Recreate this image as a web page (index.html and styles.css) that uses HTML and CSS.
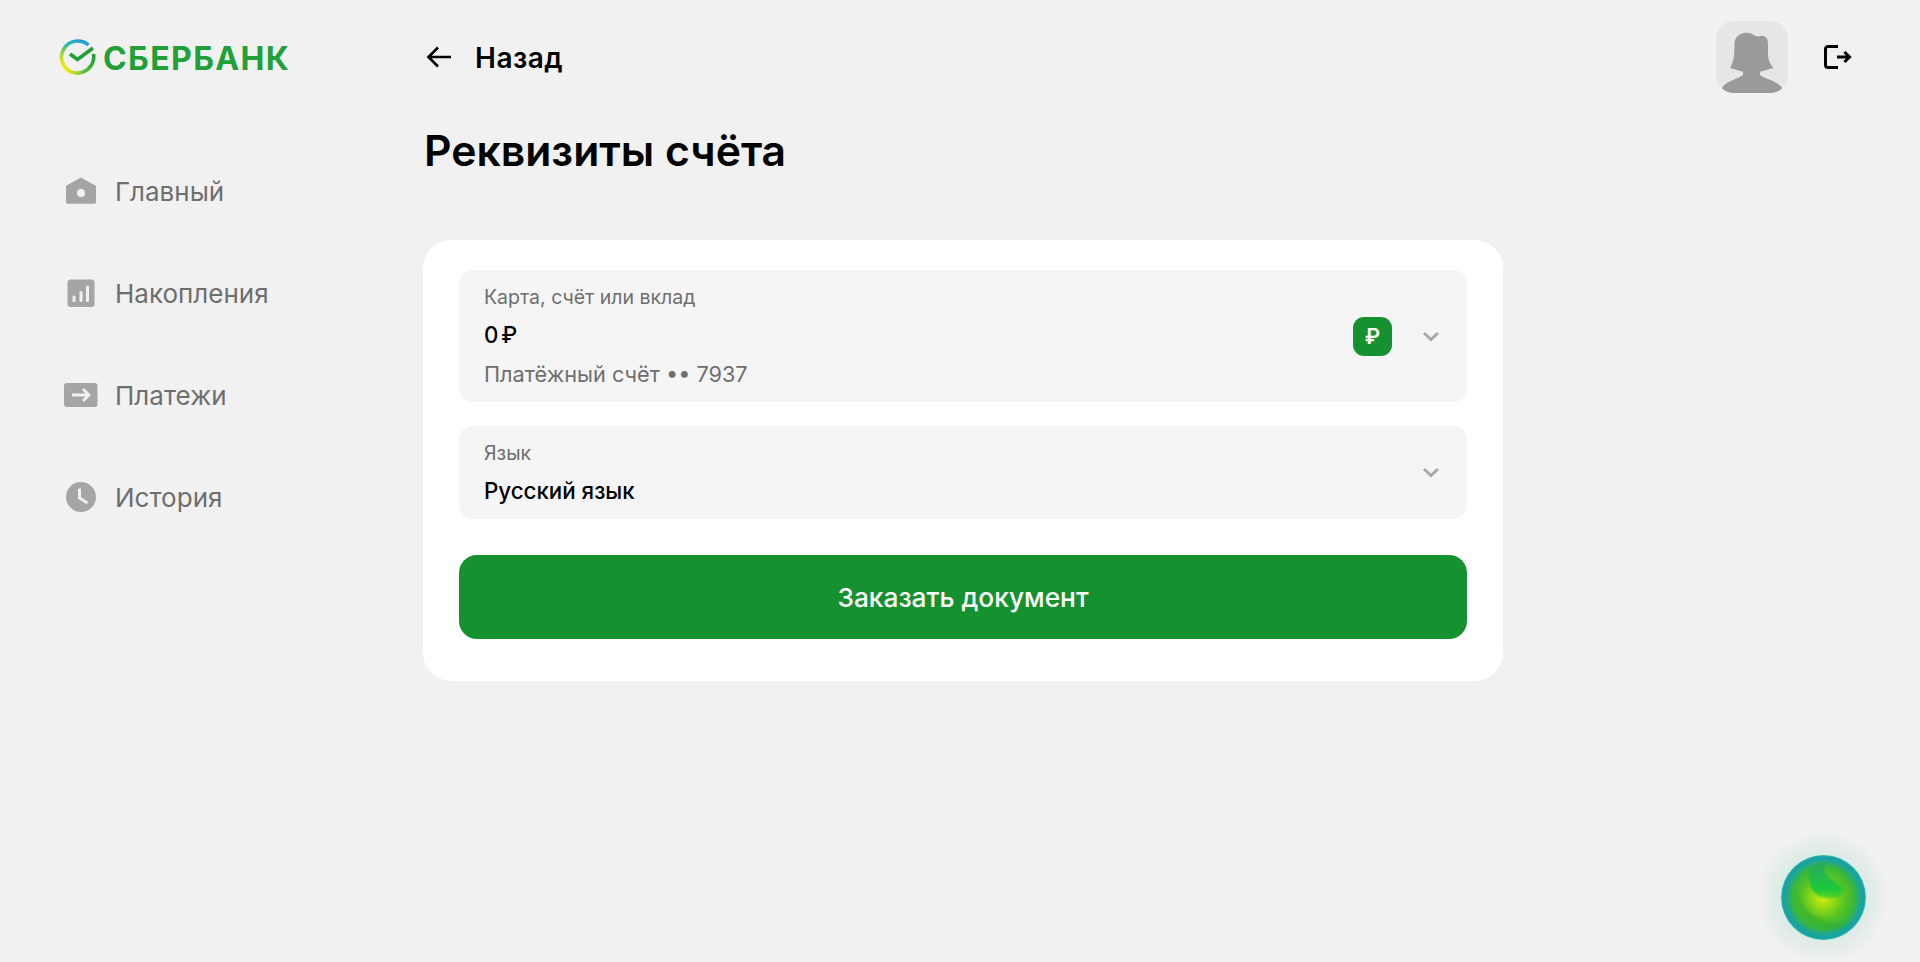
FILE: index.html
```html
<!DOCTYPE html>
<html lang="ru">
<head>
    <meta charset="UTF-8">
    <meta name="viewport" content="width=device-width, initial-scale=1.0">
    <title>Реквизиты счёта</title>

    <link rel="stylesheet" href="styles.css">
</head>

<body>
  <div class="layout">
    <aside class="sidebar">
      <div class="logo">
        <svg class="logo-mark" width="37" height="37" viewBox="0 0 37 37" fill="none">
          <defs>
            <linearGradient id="ringLeft" x1="26" y1="3" x2="8" y2="30" gradientUnits="userSpaceOnUse">
              <stop offset="0" stop-color="#1f9fe6"/>
              <stop offset="0.4" stop-color="#2fbd96"/>
              <stop offset="0.75" stop-color="#b6dd33"/>
              <stop offset="1" stop-color="#f2e80f"/>
            </linearGradient>
            <linearGradient id="ringBottom" x1="8" y1="32" x2="35" y2="20" gradientUnits="userSpaceOnUse">
              <stop offset="0" stop-color="#f0e812"/>
              <stop offset="0.5" stop-color="#62c23e"/>
              <stop offset="1" stop-color="#21a038"/>
            </linearGradient>
          </defs>
          <path d="M29.500 6A16.300 16.300 0 0 0 18.500 2 16.300 16.300 0 0 0 5 27" stroke="url(#ringLeft)" stroke-width="3.600"/>
          <path d="M5 27A16.300 16.300 0 0 0 34.500 15" stroke="url(#ringBottom)" stroke-width="3.600"/>
          <path d="M11 15l7.500 5.500L34 9" stroke="#21a038" stroke-width="3.600"/>
        </svg>
        <span class="logo-text">СБЕРБАНК</span>
      </div>

      <nav class="menu">
        <a class="menu-item">
          <span class="menu-icon">
            <svg width="32" height="32" viewBox="0 0 32 32"><path d="M16 2.500l14 7.700a1.500 1.500 0 0 1 1 1.300v15.700a1.600 1.600 0 0 1-1.600 1.600H2.600A1.600 1.600 0 0 1 1 27.200V11.500a1.500 1.500 0 0 1 1-1.300z" fill="#a5a5a5"/><circle cx="16" cy="18" r="4" fill="#f1f1f1"/></svg>
          </span>
          Главный
        </a>
        <a class="menu-item">
          <span class="menu-icon">
            <svg width="32" height="32" viewBox="0 0 32 32"><rect x="2.500" y="2.500" width="27" height="27.500" rx="3" fill="#a5a5a5"/><rect x="7.500" y="18.500" width="3" height="6.500" rx="1.500" fill="#f1f1f1"/><rect x="14.500" y="14" width="3" height="11" rx="1.500" fill="#f1f1f1"/><rect x="21" y="8.500" width="3" height="16.500" rx="1.500" fill="#f1f1f1"/></svg>
          </span>
          Накопления
        </a>
        <a class="menu-item">
          <span class="menu-icon">
            <svg width="34" height="32" viewBox="0 0 34 32"><rect x="0" y="4" width="33.500" height="24" rx="3" fill="#a5a5a5"/><path d="M8 16h17M19 10l6 6-6 6" fill="none" stroke="#f1f1f1" stroke-width="2.800"/></svg>
          </span>
          Платежи
        </a>
        <a class="menu-item">
          <span class="menu-icon">
            <svg width="32" height="32" viewBox="0 0 32 32"><circle cx="16" cy="16" r="15" fill="#a5a5a5"/><path d="M14.500 7.500V17l8 5" fill="none" stroke="#f1f1f1" stroke-width="3"/></svg>
          </span>
          История
        </a>
      </nav>
    </aside>

    <main class="content">
      <header class="topbar">
        <a class="back">
          <svg width="26" height="26" viewBox="0 0 26 26" fill="none"><path d="M25 13H2.500M12 3.500L2.500 13l9.500 9.500" stroke="#000" stroke-width="2.600"/></svg>
          <span class="back-label">Назад</span>
        </a>
        <div class="user">
          <div class="avatar">
            <svg width="72" height="72" viewBox="0 0 72 72"><path d="M9 72C6 71 5 69 6 67 10 60 22 58 27 54V50.700L14 47C18 41 18.500 33 18.500 22 19 17 22 14 25 13 28 11.500 32 11.500 35 12.500 38 14 40 16 43 15.500 46 14.500 49 15 50.500 17 52 19 52 22 52 25V32C52 39 54 43 57.500 47L44 50.700V54C49 58 62 60 66 67 67 69 65 71 62 72z" fill="#9a9a9a"/></svg>
          </div>
          <svg width="28" height="24" viewBox="0 0 28 24" fill="none"><path d="M14 1.500H4A2.500 2.500 0 0 0 1.500 4v16A2.500 2.500 0 0 0 4 22.500h10M13 12h12.500M20.500 7l5 5-5 5" stroke="#000" stroke-width="3"/></svg>
        </div>
      </header>

      <h1 class="title">Реквизиты счёта</h1>

      <section class="card">
        <div class="field field-account">
          <div class="field-text">
            <div class="field-label">Карта, счёт или вклад</div>
            <div class="field-value">0 <span class="rub">₽</span></div>
            <div class="field-sub">Платёжный счёт •• 7937</div>
          </div>
          <span class="currency">₽</span>
          <svg class="chevron" width="18" height="11" viewBox="0 0 18 11" fill="none"><path d="M2 2l7 6.500L16 2" stroke="#a8a8a8" stroke-width="3"/></svg>
        </div>

        <div class="field field-lang">
          <div class="field-text">
            <div class="field-label">Язык</div>
            <div class="field-value">Русский язык</div>
          </div>
          <svg class="chevron" width="18" height="11" viewBox="0 0 18 11" fill="none"><path d="M2 2l7 6.500L16 2" stroke="#a8a8a8" stroke-width="3"/></svg>
        </div>

        <button class="order">Заказать документ</button>
      </section>
    </main>
  </div>

  <div class="orb">
    <svg width="85" height="85" viewBox="0 0 85 85">
      <defs>
        <radialGradient id="orbFill" cx="50%" cy="50%" r="50%">
          <stop offset="0" stop-color="#d8ee10"/>
          <stop offset="0.18" stop-color="#a8e014"/>
          <stop offset="0.5" stop-color="#58c422"/>
          <stop offset="0.74" stop-color="#38b63c"/>
          <stop offset="0.88" stop-color="#1ba59a"/>
          <stop offset="0.96" stop-color="#16a0a8"/>
          <stop offset="1" stop-color="#34c8a0"/>
        </radialGradient>
        <linearGradient id="orbSwirl" x1="0" y1="0" x2="0" y2="1">
          <stop offset="0" stop-color="#28a860"/>
          <stop offset="0.75" stop-color="#1cc83c"/>
          <stop offset="1" stop-color="#3cd02c" stop-opacity="0.7"/>
        </linearGradient>
        <filter id="orbBlur"><feGaussianBlur stdDeviation="1"/></filter>
      </defs>
      <circle cx="42.500" cy="42.500" r="42.500" fill="url(#orbFill)"/>
      <path d="M42 7C34 8 28 13 28 20 28 32 34 43 44 43 52 44 62 43 62 36 62 28 48 26 44 18 42 14 42 10 46 8z" fill="url(#orbSwirl)" filter="url(#orbBlur)"/>
      <path d="M15 34c2 18 24 38 55 34-18 12-38 6-47-8-6-8-9-17-8-26z" fill="#2ca834" opacity="0.4" filter="url(#orbBlur)"/>
    </svg>
  </div>
</body>
</html>
```

FILE: styles.css
```css
* {
  box-sizing: border-box;
}

body {
  margin: 0;
  height: 962px;
  overflow: hidden;
  background-color: #f1f1f1;
  font-family: Inter, "Noto Sans", Arial, sans-serif;
  color: #000;
}

.layout {
  display: flex;
}

.sidebar {
  width: 423px;
  padding: 39px 0 0 59px;
}

.logo {
  display: flex;
  align-items: center;
  height: 37px;
}

.logo-text {
  margin: 2px 0 0 7px;
  font-size: 32px;
  font-weight: 700;
  letter-spacing: 1.400px;
  color: #21a038;
}

.menu {
  margin-top: 64px;
  padding-left: 5px;
}

.menu-item {
  display: flex;
  align-items: center;
  height: 102px;
  font-size: 26px;
  color: #6e6e6e;
}

.menu-icon {
  display: flex;
  justify-content: center;
  width: 34px;
  margin-right: 17px;
}

.content {
  width: 1080px;
}

.topbar {
  position: relative;
  display: flex;
  align-items: center;
  height: 72px;
  margin-top: 21px;
}

.back {
  display: flex;
  align-items: center;
  gap: 23px;
  margin-left: 3px;
  font-size: 28px;
  font-weight: 600;
  letter-spacing: 0.500px;
}

.back-label {
  margin-top: 2px;
}

/* sits in the far corner of the window, outside the content column */
.user {
  position: absolute;
  top: 0;
  left: 1293px;
  display: flex;
  align-items: center;
  gap: 36px;
}

.avatar {
  width: 72px;
  height: 72px;
  border-radius: 18px;
  background: #e6e6e6;
  overflow: hidden;
}

.avatar svg {
  display: block;
}

.title {
  margin: 30px 0 0 1px;
  font-size: 42.700px;
  line-height: 56px;
  font-weight: 600;
}

.card {
  display: flex;
  flex-direction: column;
  margin-top: 61px;
  padding: 30px 36px 42px;
  background: #fff;
  border-radius: 28px;
}

.field {
  display: flex;
  align-items: center;
  padding: 0 27px 0 25px;
  background: #f5f5f5;
  border-radius: 14px;
}

.field-account {
  height: 132px;
}

.field-lang {
  height: 93px;
  margin-top: 24px;
}

.field-text {
  flex: 1;
}

.field-label {
  font-size: 19.500px;
  line-height: 26px;
  color: #6e6e6e;
}

.field-value {
  margin-top: 11px;
  font-size: 22.300px;
  line-height: 28px;
  font-weight: 500;
}

.rub {
  margin-left: -3px;
}

.field-sub {
  margin-top: 11px;
  font-size: 21.700px;
  line-height: 28px;
  color: #6e6e6e;
}

.currency {
  display: flex;
  align-items: center;
  justify-content: center;
  width: 39px;
  height: 39px;
  margin-right: 30px;
  border-radius: 11px;
  background: #15912f;
  color: #fff;
  font-size: 21px;
  font-weight: 600;
}

.order {
  height: 84px;
  margin-top: 36px;
  border: none;
  border-radius: 18px;
  background: #15912f;
  color: #fff;
  font-family: inherit;
  font-size: 26.300px;
  font-weight: 500;
}

.orb {
  position: fixed;
  left: 1758px;
  top: 832px;
  width: 130px;
  height: 130px;
  display: flex;
  align-items: center;
  justify-content: center;
  background: radial-gradient(circle, rgba(190, 225, 215, 0.5) 40%, rgba(240, 240, 240, 0) 72%);
}

.orb svg {
  display: block;
}
```
